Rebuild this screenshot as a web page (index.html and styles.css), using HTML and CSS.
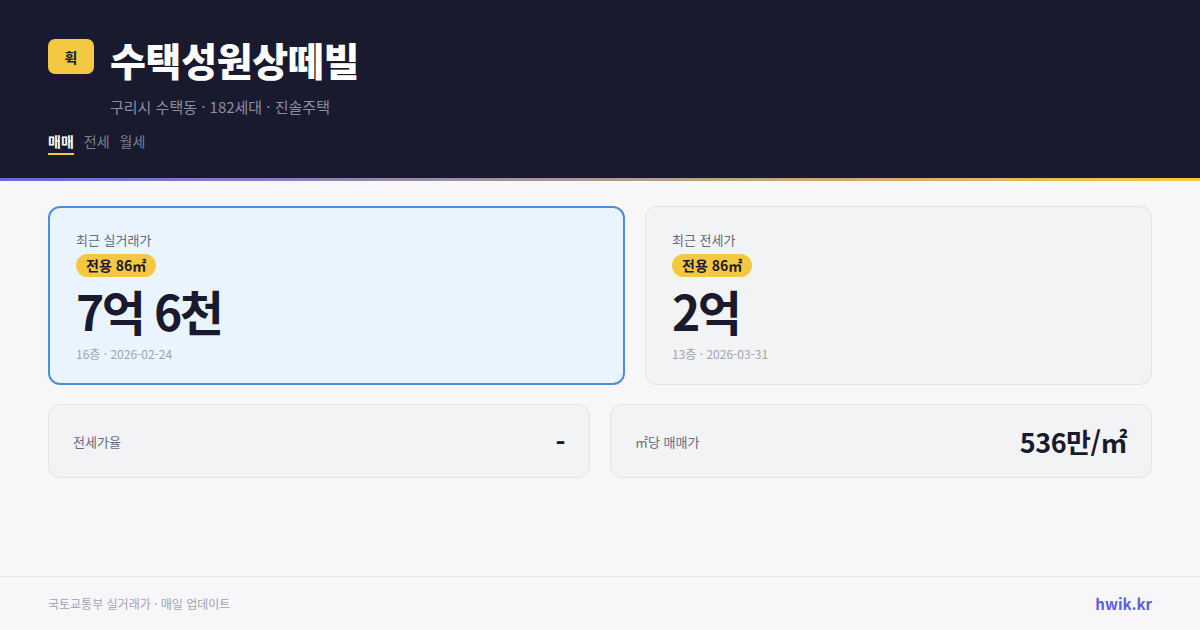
FILE: index.html
```html
<!DOCTYPE html>
<html lang="ko">
<head>
<meta charset="utf-8">
<title>수택성원상떼빌</title>
<link rel="stylesheet" href="styles.css">
</head>
<body>
<div class="page">
  <header class="hero">
    <div class="title-row">
      <div class="logo">휙</div>
      <h1 class="title">수택성원상떼빌</h1>
    </div>
    <p class="subtitle">구리시 수택동 · 182세대 · 진솔주택</p>
    <nav class="tabs">
      <span class="tab active">매매</span>
      <span class="tab">전세</span>
      <span class="tab">월세</span>
    </nav>
  </header>
  <div class="accent"></div>
  <main class="main">
    <section class="top-grid">
      <div class="card card-primary">
        <div class="card-label">최근 실거래가</div>
        <div class="badge-row"><span class="badge">전용 86㎡</span></div>
        <div class="price">7억 6천</div>
        <div class="meta">16층 · 2026-02-24</div>
      </div>
      <div class="card">
        <div class="card-label">최근 전세가</div>
        <div class="badge-row"><span class="badge">전용 86㎡</span></div>
        <div class="price">2억</div>
        <div class="meta">13층 · 2026-03-31</div>
      </div>
    </section>
    <section class="stat-grid">
      <div class="stat">
        <span class="stat-label">전세가율</span>
        <span class="stat-value">-</span>
      </div>
      <div class="stat">
        <span class="stat-label">㎡당 매매가</span>
        <span class="stat-value">536만/㎡</span>
      </div>
    </section>
  </main>
  <footer class="footer">
    <span class="source">국토교통부 실거래가 · 매일 업데이트</span>
    <span class="brand">hwik.kr</span>
  </footer>
</div>
</body>
</html>
```

FILE: styles.css
```css
* { box-sizing: border-box; }
html, body { margin: 0; padding: 0; }
body {
  font-family: "Noto Sans CJK KR", "Noto Sans", sans-serif;
  background: #f7f7f9;
  color: #1a1a2e;
  width: 1200px;
  height: 630px;
  overflow: hidden;
}
.page {
  display: flex;
  flex-direction: column;
  height: 630px;
}
.hero {
  background: #1a1a2e;
  padding: 37px 48px 23px;
}
.title-row {
  display: flex;
  align-items: flex-start;
  gap: 16px;
}
.logo {
  margin-top: 2px;
  width: 46px;
  height: 35px;
  border-radius: 7px;
  background: #f5c842;
  color: #1a1a2e;
  font-weight: 700;
  font-size: 14px;
  display: flex;
  align-items: center;
  justify-content: center;
}
.title {
  margin: 0;
  color: #ffffff;
  font-size: 39px;
  line-height: 44px;
  font-weight: 900;
  letter-spacing: -0.3px;
}
.subtitle {
  margin: 16px 0 0 62px;
  color: #8b8ea3;
  font-size: 15px;
  line-height: 20px;
}
.tabs {
  display: flex;
  gap: 10px;
  margin-top: 15px;
}
.tab {
  font-size: 14px;
  line-height: 18px;
  color: #7c7f94;
  padding-bottom: 3px;
  border-bottom: 2px solid transparent;
}
.tab.active {
  color: #ffffff;
  font-weight: 700;
  border-bottom-color: #f5c842;
}
.accent {
  height: 3px;
  background: linear-gradient(90deg, #6a66e0, #f5c842);
}
.main {
  flex: 1;
  padding: 25px 48px 0;
  display: flex;
  flex-direction: column;
  gap: 19px;
}
.top-grid {
  display: grid;
  grid-template-columns: 577fr 507fr;
  gap: 20px;
}
.card {
  background: #f2f3f5;
  border: 1px solid #e3e4e8;
  border-radius: 12px;
  padding: 24px 26px 20px;
  height: 179px;
}
.card-primary {
  background: #eaf4ff;
  border: 2px solid #4a8fd8;
  padding: 23px 26px 20px;
}
.card-label {
  font-size: 13px;
  line-height: 18px;
  color: #666a78;
}
.badge-row {
  margin-top: 5px;
  display: flex;
}
.badge {
  background: #f5c842;
  color: #1a1a2e;
  font-weight: 700;
  font-size: 14px;
  line-height: 23px;
  padding: 0 10px;
  border-radius: 12px;
}
.price {
  margin-top: 7px;
  font-size: 48px;
  line-height: 52px;
  font-weight: 700;
  letter-spacing: -2.6px;
  color: #1a1a2e;
}
.meta {
  margin-top: 10px;
  font-size: 12px;
  line-height: 16px;
  color: #a0a3b1;
}
.stat-grid {
  display: grid;
  grid-template-columns: 1fr 1fr;
  gap: 20px;
}
.stat {
  height: 74px;
  background: #f2f3f5;
  border: 1px solid #e3e4e8;
  border-radius: 12px;
  padding: 0 24px;
  display: flex;
  align-items: center;
  justify-content: space-between;
}
.stat-label {
  font-size: 13px;
  color: #666a78;
}
.stat-value {
  font-size: 27px;
  font-weight: 700;
  color: #1a1a2e;
  letter-spacing: -0.5px;
}
.footer {
  height: 54px;
  border-top: 1px solid #e5e6ea;
  padding: 0 48px;
  display: flex;
  align-items: center;
  justify-content: space-between;
}
.source {
  font-size: 12px;
  color: #a0a3b1;
}
.brand {
  font-size: 15px;
  font-weight: 700;
  color: #5b5fe0;
}
```
